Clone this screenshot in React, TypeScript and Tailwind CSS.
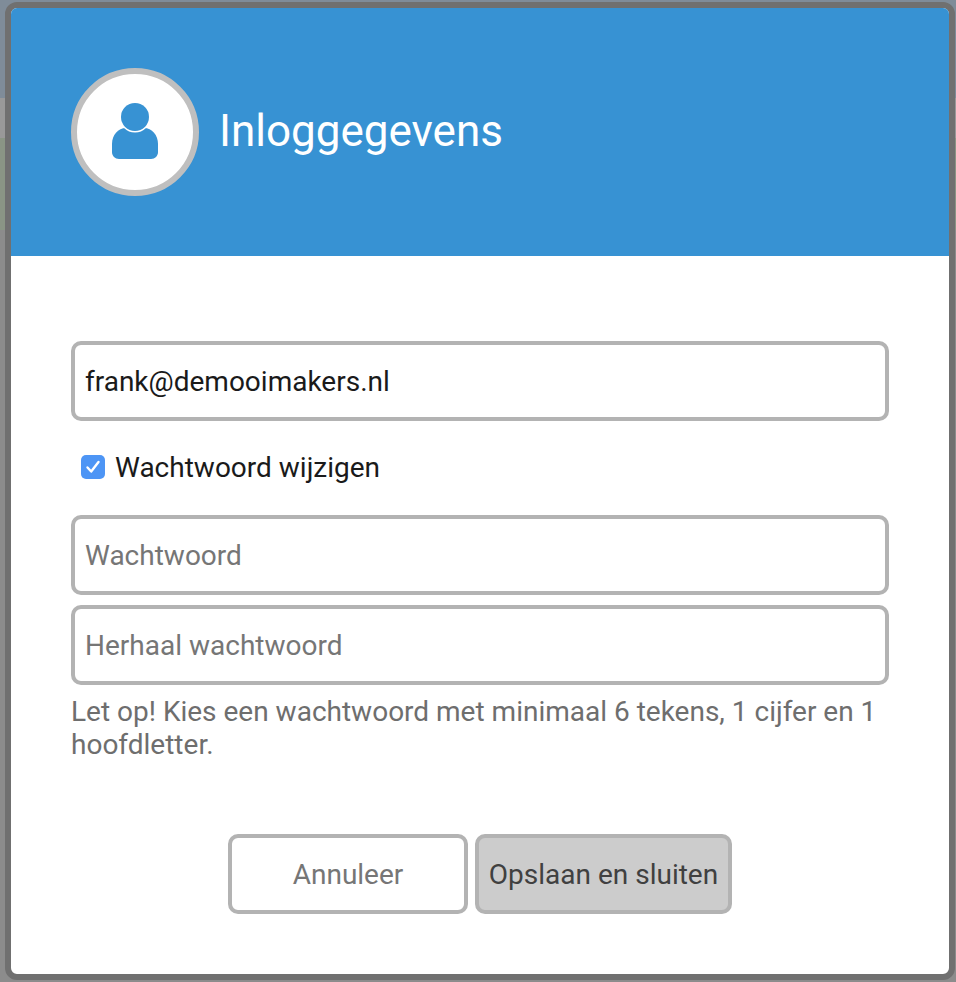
const font = "font-['Roboto',sans-serif]";

function UserIcon() {
  return (
    <svg className="mb-[2px]" width="46" height="56" viewBox="0 0 46 56" fill="none">
      <path
        d="M7 56C3 56 0 53 0 49V41C0 32 6 25 14 25H32C40 25 46 32 46 41V49C46 53 43 56 39 56H7Z"
        fill="#3792d3"
      />
      <circle cx="23" cy="14" r="15.5" fill="#ffffff" />
      <circle cx="23" cy="14" r="14" fill="#3792d3" />
    </svg>
  );
}

function TextField({ value, placeholder }: { value?: string; placeholder?: string }) {
  return (
    <div className="flex h-[80px] w-[818px] items-center rounded-[10px] border-4 border-[#b3b3b3] bg-white pl-[10px] pt-[2px]">
      {value ? (
        <span className="text-[28px] text-[#1a1a1a]">{value}</span>
      ) : (
        <span className="text-[28px] text-[#767676]">{placeholder}</span>
      )}
    </div>
  );
}

export default function App() {
  return (
    <div
      className={`h-[982px] w-[956px] overflow-hidden bg-[linear-gradient(to_bottom,#7f8c99_0,#7f8c99_98px,#999999_98px,#999999_138px,#8a9585_138px,#8a9585_230px,#8c8c8c_230px)] pl-[5px] pt-[2px] ${font}`}
    >
      <div className="flex h-[978px] w-[950px] flex-col overflow-hidden rounded-[12px] border-[6px] border-[#707070] bg-white">
        <header className="flex h-[248px] items-center gap-[20px] bg-[#3792d3] pl-[60px]">
          <div className="flex h-[128px] w-[128px] items-center justify-center rounded-full border-[6px] border-[#bfbfbf] bg-white">
            <UserIcon />
          </div>
          <h1 className="mb-[2px] text-[44px] font-normal text-white">Inloggegevens</h1>
        </header>

        <main className="flex flex-1 flex-col pl-[60px] pt-[85px]">
          <TextField value="frank@demooimakers.nl" />

          <label className="mt-[30px] flex h-[32px] items-center gap-[10px] pl-[10px]">
            <span className="flex h-[24px] w-[24px] items-center justify-center rounded-[5px] bg-[#4d95f5]">
              <svg width="16" height="16" viewBox="0 0 16 16" fill="none">
                <path
                  d="M2.5 8.5L6.2 12.5L13.5 3"
                  stroke="#ffffff"
                  strokeWidth="2.4"
                  strokeLinecap="round"
                  strokeLinejoin="round"
                />
              </svg>
            </span>
            <span className="pt-[2px] text-[28px] text-[#1a1a1a]">Wachtwoord wijzigen</span>
          </label>

          <div className="mt-[32px] flex flex-col gap-[10px]">
            <TextField placeholder="Wachtwoord" />
            <TextField placeholder="Herhaal wachtwoord" />
          </div>

          <p className="mt-[10px] w-[818px] text-[28px] leading-[33px] text-[#6e6e6e]">
            Let op! Kies een wachtwoord met minimaal 6 tekens, 1 cijfer en 1 hoofdletter.
          </p>

          <div className="mt-[73px] flex gap-[7px] pl-[157px]">
            <button className="h-[80px] w-[240px] rounded-[10px] border-4 border-[#b3b3b3] bg-white pt-[2px] text-[28px] text-[#767676]">
              Annuleer
            </button>
            <button className="h-[80px] w-[257px] rounded-[10px] border-4 border-[#b3b3b3] bg-[#cccccc] pt-[2px] text-[28px] text-[#404040]">
              Opslaan en sluiten
            </button>
          </div>
        </main>
      </div>
    </div>
  );
}
